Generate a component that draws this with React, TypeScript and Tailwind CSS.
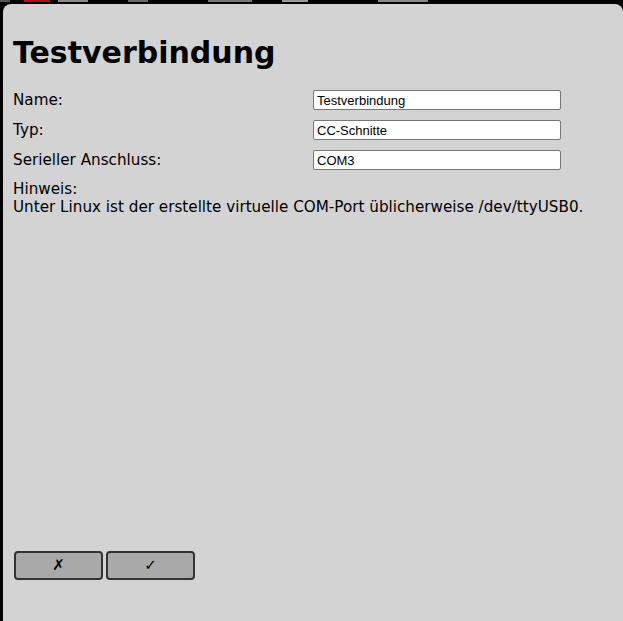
import React from 'react';

const rows = [
  { label: 'Name:', value: 'Testverbindung' },
  { label: 'Typ:', value: 'CC-Schnitte' },
  { label: 'Serieller Anschluss:', value: 'COM3' },
];

// faint remains of the page behind the dialog
const strip = [
  { w: 'w-[10px]', c: 'bg-[#555]' },
  { w: 'w-[14px]', c: 'bg-black' },
  { w: 'w-[26px]', c: 'bg-[#b01010]' },
  { w: 'w-[8px]', c: 'bg-black' },
  { w: 'w-[30px]', c: 'bg-[#8a8a8a]' },
  { w: 'w-[40px]', c: 'bg-black' },
  { w: 'w-[20px]', c: 'bg-[#666]' },
  { w: 'w-[60px]', c: 'bg-black' },
  { w: 'w-[44px]', c: 'bg-[#777]' },
  { w: 'w-[30px]', c: 'bg-black' },
  { w: 'w-[26px]', c: 'bg-[#999]' },
  { w: 'w-[70px]', c: 'bg-black' },
  { w: 'w-[50px]', c: 'bg-[#888]' },
];

const App: React.FC = () => {
  return (
    <div className="w-[623px] h-[621px] overflow-hidden bg-black">
      <div className="flex h-[4px] items-start overflow-hidden">
        {strip.map((s, i) => (
          <div key={i} className={`${s.w} ${s.c} h-[2px] shrink-0`} />
        ))}
      </div>
      <div
        className="ml-[3px] w-[620px] h-[620px] rounded-t-[8px] bg-[#d3d3d3] flex flex-col pl-[10px] pt-[31px] pb-[44px] text-black"
        style={{ fontFamily: '"DejaVu Sans", Verdana, sans-serif' }}
      >
        <h1 className="text-[30px] leading-[36px] font-bold">Testverbindung</h1>
        <div className="mt-[14px] flex flex-col">
          {rows.map((r) => (
            <div key={r.label} className="grid grid-cols-[300px_1fr] items-center h-[30px]">
              <span className="text-[15.2px]">{r.label}</span>
              <input
                readOnly
                value={r.value}
                className="w-[248px] h-[20px] bg-white border border-[#767676] rounded-[2px] px-[3px] text-[13px] text-black outline-none"
                style={{ fontFamily: '"Liberation Sans", Arial, sans-serif' }}
              />
            </div>
          ))}
        </div>
        <div className="mt-[5px] text-[15.2px] leading-[18px]">
          <div>Hinweis:</div>
          <div>Unter Linux ist der erstellte virtuelle COM-Port üblicherweise /dev/ttyUSB0.</div>
        </div>
        <div className="mt-auto flex gap-[3px] pl-[1px]">
          <button className="w-[89px] h-[29px] bg-[#a9a9a9] border-2 border-[#333] rounded-[4px] text-[15px] flex items-center justify-center">
            ✗
          </button>
          <button className="w-[89px] h-[29px] bg-[#a9a9a9] border-2 border-[#333] rounded-[4px] text-[15px] flex items-center justify-center">
            ✓
          </button>
        </div>
      </div>
    </div>
  );
};

export default App;
